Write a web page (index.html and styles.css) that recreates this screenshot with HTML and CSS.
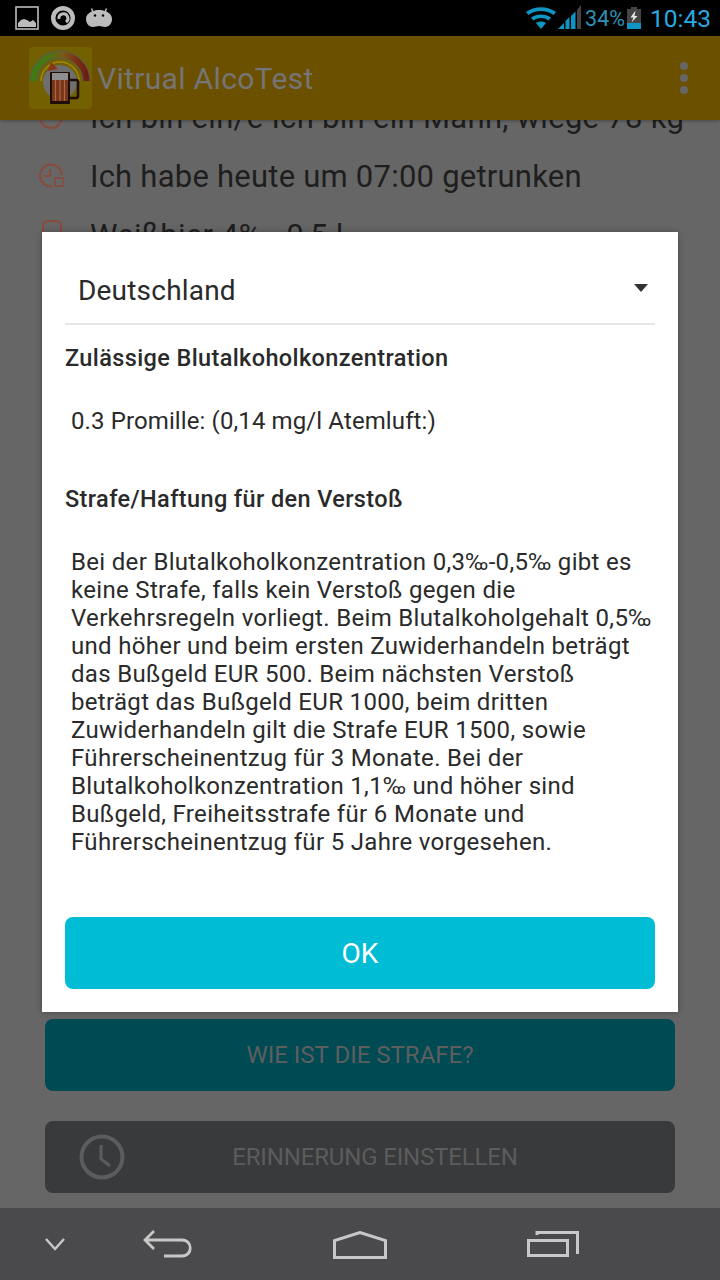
FILE: index.html
```html
<!DOCTYPE html>
<html lang="de">
<head>
<meta charset="utf-8">
<title>Vitrual AlcoTest</title>
<link rel="stylesheet" href="styles.css">
</head>
<body>
<div class="screen">
  <header class="status">
    <div class="status-left">
      <svg width="24" height="24" viewBox="0 0 24 24"><rect x="1" y="1" width="22" height="22" fill="none" stroke="#bcbcbc" stroke-width="1.600"/><path d="M3 21v-4l3-3 3-1 3 1 3 2 3-2 3 3v4z" fill="#bcbcbc"/></svg>
      <svg width="24" height="24" viewBox="0 0 24 24"><circle cx="12" cy="12" r="9.800" fill="none" stroke="#bcbcbc" stroke-width="4.400"/><path d="M8 13a4.500 4.500 0 1 1 7 3" fill="none" stroke="#bcbcbc" stroke-width="3"/></svg>
      <svg class="ic-droid" width="26" height="20" viewBox="0 0 26 20"><path d="M7 4 5.500 0.500M19 4l1.500-3.500" stroke="#bcbcbc" stroke-width="1.500"/><path d="M7 3c3-1.500 9-1.500 12 0 4 1.500 7 4 7 8s-2.500 8-7 8c-2 0-4-1-6-1s-4 1-6 1c-4.500 0-7-4-7-8s3-6.500 7-8z" fill="#bcbcbc"/><circle cx="9" cy="7.500" r="1.200" fill="#000"/><circle cx="17" cy="7.500" r="1.200" fill="#000"/></svg>
    </div>
    <div class="status-right">
      <svg width="30" height="22" viewBox="0 0 30 22"><path d="M0 5c8-6.500 22-6.500 30 0l-2.500 3C20.500 2.500 9.500 2.500 2.500 8z" fill="#0e95c4"/><path d="M5 10.500c5.500-4 14.500-4 20 0l-2.500 3c-4.500-3.300-10.500-3.300-15 0z" fill="#0e95c4"/><path d="M10 16c3-2 7-2 10 0l-5 6z" fill="#0e95c4"/></svg>
      <svg class="ic-signal" width="23" height="24" viewBox="0 0 23 24"><path d="M0 24 6 18V24z" fill="#0e95c4"/><path d="M7.500 24V16L11.500 12V24z" fill="#0e95c4"/><path d="M13 24V11L17.500 6.500V24z" fill="#0e95c4"/><path d="M19 24V5L23 0V24z" fill="#444"/></svg>
      <span class="pct">34%</span>
      <svg class="ic-batt" width="14" height="22" viewBox="0 0 14 22"><path d="M4 0h6v2h4v20H0V2h4z" fill="#444"/><path d="M0 16h14v6H0z" fill="#0e95c4"/><path d="M8.500 3.500 3.500 10.500h3l-2 5L10.500 9h-3z" fill="#e8e8e8"/></svg>
      <span class="clock">10:43</span>
    </div>
  </header>

  <div class="appbar">
    <div class="logo">
      <svg width="63" height="62" viewBox="0 0 63 62">
        <defs>
          <linearGradient id="gauge" x1="0" y1="0" x2="1" y2="0">
            <stop offset="0" stop-color="#3f7a12"/>
            <stop offset=".3" stop-color="#4d7414"/>
            <stop offset=".55" stop-color="#7a5a14"/>
            <stop offset=".8" stop-color="#7a3014"/>
            <stop offset="1" stop-color="#6d1e14"/>
          </linearGradient>
        </defs>
        <path d="M4.500 34A26.500 26.500 0 0 1 57.500 34" fill="none" stroke="#5a5a4a" stroke-width="8"/>
        <path d="M4.500 34A26.500 26.500 0 0 1 57.500 34" fill="none" stroke="url(#gauge)" stroke-width="6"/>
        <path d="M12 34A19 19 0 0 1 50 34" fill="none" stroke="#a08a10" stroke-width="1.500"/>
        <circle cx="31" cy="35" r="17" fill="#6e6e6e"/>
        <path d="M22 15 29 22 19 24z" fill="#8a3520"/>
        <path d="M41 33h6a2 2 0 0 1 2 2v14a2 2 0 0 1-2 2h-6" fill="none" stroke="#1f0e06" stroke-width="2.500"/>
        <rect x="21" y="25" width="20" height="32" rx="1" fill="#1f0e06"/>
        <rect x="23" y="26" width="16" height="7" fill="#8e8e8e"/>
        <rect x="23" y="33" width="16" height="21" fill="#7a3418"/>
        <path d="M26.500 33v21M31 33v21M35.500 33v21" stroke="#a46a4c" stroke-width="1.200"/>
      </svg>
    </div>
    <span class="app-title">Vitrual AlcoTest</span>
    <span class="overflow"><i></i><i></i><i></i></span>
  </div>

  <main class="content">
    <ul class="facts">
      <li class="fact-first"><svg class="fact-ic" width="26" height="26" viewBox="0 0 26 26"><circle cx="12" cy="13" r="11" fill="none" stroke="#8a4a3a" stroke-width="2"/></svg>Ich bin ein/e Ich bin ein Mann, wiege 78 kg</li>
      <li><svg class="fact-ic" width="26" height="26" viewBox="0 0 26 26"><path d="M13 23.500A11 11 0 1 1 23 12" fill="none" stroke="#8a4a3a" stroke-width="2"/><path d="M11 6v7H5" fill="none" stroke="#8a4a3a" stroke-width="2"/><rect x="16" y="15" width="8" height="8" fill="none" stroke="#8a4a3a" stroke-width="1.500"/></svg>Ich habe heute um 07:00 getrunken</li>
      <li><svg class="fact-ic" width="26" height="30" viewBox="0 0 26 30"><path d="M4 14V6Q4 1 9 1H17Q22 1 22 6V14L20 29H6z" fill="none" stroke="#8a4a3a" stroke-width="2"/></svg>Weißbier 4% - 0,5 l</li>
    </ul>
    <div class="actions">
      <button class="btn btn-teal">WIE IST DIE STRAFE?</button>
      <button class="btn btn-dark">
        <svg class="btn-ic" width="46" height="46" viewBox="0 0 46 46"><circle cx="23" cy="23" r="20.500" fill="none" stroke="#5c5c5c" stroke-width="4"/><path d="M22 11v14l9 7" fill="none" stroke="#5c5c5c" stroke-width="3"/></svg>
        ERINNERUNG EINSTELLEN
      </button>
    </div>
  </main>

  <nav class="navbar">
    <svg class="nav-chev" width="22" height="14" viewBox="0 0 22 14"><path d="M2 2l9 10 9-10" fill="none" stroke="#c8c8c8" stroke-width="2.500"/></svg>
    <svg class="nav-back" width="50" height="28" viewBox="0 0 50 28"><path d="M11 1 2 10l9 9M2 10h37c11 0 11 16 0 16H21" fill="none" stroke="#c8c8c8" stroke-width="2.800"/></svg>
    <svg class="nav-home" width="54" height="28" viewBox="0 0 54 28"><path d="M1.500 26.500V9.500L27 1.500l25.500 8v17z" fill="none" stroke="#c8c8c8" stroke-width="3"/></svg>
    <svg class="nav-rec" width="52" height="26" viewBox="0 0 52 26"><path d="M10 4V1.500h40.500V23" fill="none" stroke="#c8c8c8" stroke-width="3"/><rect x="1.500" y="9.500" width="39" height="15" fill="none" stroke="#c8c8c8" stroke-width="3"/></svg>
  </nav>

  <section class="dialog">
    <div class="spinner">
      <span>Deutschland</span>
      <i class="caret"></i>
    </div>
    <h2 class="dlg-head first">Zulässige Blutalkoholkonzentration</h2>
    <p class="dlg-text limit">0.3 Promille: (0,14 mg/l Atemluft:)</p>
    <h2 class="dlg-head second">Strafe/Haftung für den Verstoß</h2>
    <p class="dlg-text penalty">Bei der Blutalkoholkonzentration 0,3‰-0,5‰ gibt es keine Strafe, falls kein Verstoß gegen die Verkehrsregeln vorliegt. Beim Blutalkoholgehalt 0,5‰ und höher und beim ersten Zuwiderhandeln beträgt das Bußgeld EUR 500. Beim nächsten Verstoß beträgt das Bußgeld EUR 1000, beim dritten Zuwiderhandeln gilt die Strafe EUR 1500, sowie Führerscheinentzug für 3 Monate. Bei der Blutalkoholkonzentration 1,1‰ und höher sind Bußgeld, Freiheitsstrafe für 6 Monate und Führerscheinentzug für 5 Jahre vorgesehen.</p>
    <button class="ok">OK</button>
  </section>
</div>
</body>
</html>
```

FILE: styles.css
```css
* { box-sizing: border-box; }
html, body { margin: 0; padding: 0; }
body { font-family: Roboto, "Liberation Sans", sans-serif; background: #666; }
.screen { position: relative; width: 720px; height: 1280px; display: flex; flex-direction: column; overflow: hidden; background: #666; }

.status { height: 36px; flex: none; background: #000; display: flex; justify-content: space-between; align-items: center; padding: 0 9px 0 15px; }
.status-left { display: flex; align-items: center; gap: 12px; }
.ic-droid { margin-left: -1px; }
.status-right { display: flex; align-items: center; }
.ic-signal { margin-left: 2px; margin-bottom: 2px; }
.pct { font-size: 21.500px; color: #2f8fb4; margin-left: 4px; }
.ic-batt { margin-left: 2px; }
.clock { font-size: 24.500px; color: #2aa9e0; margin-left: 9px; }

.appbar { height: 84px; flex: none; background: #6b5000; display: flex; align-items: center; padding: 0 32px 0 29px; position: relative; z-index: 1; box-shadow: 0 1px 3px rgba(0,0,0,.3); }
.logo { width: 63px; height: 62px; background: #736000; border-radius: 4px; flex: none; }
.logo svg { display: block; }
.app-title { font-size: 30px; letter-spacing: .33px; color: #757575; margin-left: 5px; flex: 1; }
.overflow { display: flex; flex-direction: column; gap: 4px; }
.overflow i { width: 8px; height: 8px; border-radius: 50%; background: #666; display: block; }

.content { flex: 1; min-height: 0; display: flex; flex-direction: column; justify-content: space-between; overflow: hidden; }
.facts { list-style: none; margin: -32.500px 0 0; padding: 0 0 0 39px; font-size: 31px; letter-spacing: .23px; color: #1e1e1e; }
.facts li { height: 59px; display: flex; align-items: center; white-space: nowrap; }
.facts .fact-first { letter-spacing: .3px; }
.fact-ic { margin-right: 25px; flex: none; }

.actions { display: flex; flex-direction: column; gap: 30px; padding: 0 45px 15px; }
.btn { position: relative; display: block; width: 630px; height: 72px; border: 0; border-radius: 8px; font: inherit; font-size: 24px; }
.btn-teal { background: #004a54; color: #5e5e5e; }
.btn-dark { background: #383a3c; color: #5c5c5c; padding-left: 36px; letter-spacing: -.15px; }
.btn-ic { position: absolute; left: 34px; top: 13px; }

.navbar { height: 72px; flex: none; background: #4a4a4c; display: flex; align-items: center; padding-left: 44px; }
.nav-back { margin-left: 77px; }
.nav-home { margin-left: 140px; margin-top: 2px; }
.nav-rec { margin-left: 140px; }

.dialog { position: absolute; left: 42px; top: 232px; width: 636px; height: 780px; background: #fff; padding: 0 23px; box-shadow: 0 0 6px rgba(0,0,0,.3); display: flex; flex-direction: column; color: #2a2a2a; }
.spinner { height: 93px; flex: none; display: flex; align-items: center; justify-content: space-between; border-bottom: 2px solid #e6e6e6; padding: 26px 7px 0 13px; font-size: 28px; letter-spacing: .2px; }
.caret { width: 0; height: 0; border-left: 7px solid transparent; border-right: 7px solid transparent; border-top: 8px solid #333; margin-top: -6px; }
.dlg-head { margin: 0; font-size: 23.500px; letter-spacing: .38px; font-weight: 500; line-height: 28px; }
.dlg-head.first { margin-top: 19px; }
.dlg-head.second { margin-top: 50px; }
.dlg-text { margin: 0; font-size: 24px; letter-spacing: .32px; line-height: 28px; padding-left: 6px; }
.limit { margin-top: 35px; letter-spacing: .11px; }
.penalty { margin-top: 35px; height: 305px; }
.ok { display: block; margin-top: 64px; width: 590px; height: 72px; border: 0; border-radius: 8px; background: #00bcd4; color: #fff; font: inherit; font-size: 28px; padding-top: 2px; }
```
